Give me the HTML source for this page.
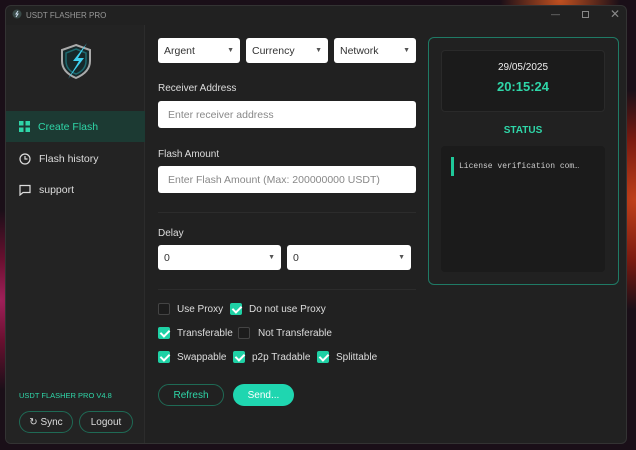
<!DOCTYPE html>
<html><head><meta charset="utf-8"><style>
*{box-sizing:border-box;margin:0;padding:0}
body{width:636px;height:450px;overflow:hidden;font-family:"Liberation Sans",sans-serif;position:relative;
background:radial-gradient(circle at 0 300px,#a0205a 0,#6a1030 40px,transparent 90px),radial-gradient(circle at 636px 200px,#c0401a 0,#7a1a10 60px,transparent 110px),radial-gradient(circle at 560px 0,#c05020 0,transparent 60px),#1a0f18;}
.a{position:absolute}
.win{left:5px;top:5px;width:622px;height:439px;background:#212121;border-radius:6px;border:1px solid #333;overflow:hidden}
.side{left:0;top:19px;width:139px;height:420px;background:#232323;border-right:1px solid #2c2c2c}
.title{left:20px;top:5px;font-size:8px;color:#999}
.nav{left:0;width:139px;height:31px;font-size:10.5px;color:#ddd;display:flex;align-items:center;padding-left:13px;gap:8px}
.sel{box-sizing:border-box;padding:0 6px;height:19px;background:#fff;border-radius:3px;font-size:10.5px;color:#333;display:flex;align-items:center;justify-content:space-between}
.sel::after{content:"▼";font-size:7px;color:#555}
.inp{height:27px;background:#fff;border-radius:3px;font-size:10.5px;color:#888;display:flex;align-items:center;padding-left:10px}
.lbl{font-size:10px;color:#ddd}
.cb{width:12px;height:12px;border-radius:2px;border:1px solid #444;background:#1c1c1c}
.cb.on{background:#1fd1a5;border-color:#1fd1a5}
.cb.on::after{content:"";position:absolute;left:3px;top:0px;width:4px;height:7px;border:solid #fff;border-width:0 2px 2px 0;transform:rotate(45deg)}
.ct{font-size:10px;color:#ddd}
.btn{height:22px;border-radius:11px;font-size:10px;display:flex;align-items:center;justify-content:center}
.hr{height:1px;background:#2c2c2c}
</style></head><body>
<div class="a win">
 <svg class="a" style="left:6px;top:3px" width="10" height="10" viewBox="0 0 10 10"><circle cx="5" cy="5" r="4.5" fill="#3a4a48"/><path d="M6 2 L4 5 H6 L4 8" stroke="#cde" fill="none" stroke-width="1"/></svg>
 <div class="a title">USDT FLASHER PRO</div>
 <div class="a" style="left:545px;top:3px;font-size:9px;color:#888">—</div>
 <div class="a" style="left:576px;top:5px;width:7px;height:7px;border:1px solid #888"></div>
 <div class="a" style="left:604px;top:1px;font-size:12px;color:#888">✕</div>
 <div class="a side">
  <svg class="a" style="left:50px;top:16px" width="40" height="42" viewBox="0 0 40 42">
   <path d="M20 4 L34 9 V20 C34 29 27 34 20 37 C13 34 6 29 6 20 V9 Z" fill="#17282a" stroke="#aaa" stroke-width="2"/>
   <path d="M20 8 L30 12 V20 C30 27 25 31 20 33 C15 31 10 27 10 20 V12 Z" fill="none" stroke="#1e6a70" stroke-width="1.5"/>
   <path d="M31 2 L17 20 H23 L12 38 L28 17 H22 Z" fill="#3fd0f0"/>
  </svg>
  <div class="a nav" style="top:86px;background:#1c3a33;color:#2fd6a8">
   <svg width="11" height="11"><rect x="0" y="0" width="4.5" height="4.5" fill="#2fd6a8"/><rect x="6.5" y="0" width="4.5" height="4.5" fill="#2fd6a8"/><rect x="0" y="6.5" width="4.5" height="4.5" fill="#2fd6a8"/><rect x="6.5" y="6.5" width="4.5" height="4.5" fill="#2fd6a8"/></svg>Create Flash</div>
  <div class="a nav" style="top:118px"><svg width="12" height="12"><circle cx="6" cy="6" r="5" fill="none" stroke="#ddd" stroke-width="1.2"/><path d="M6 3V6H8.5" stroke="#ddd" fill="none" stroke-width="1.2"/></svg>Flash history</div>
  <div class="a nav" style="top:149px"><svg width="12" height="12"><path d="M1 1.5H11V8.5H4L1 11Z" fill="none" stroke="#ddd" stroke-width="1.2"/></svg>support</div>
  <div class="a" style="left:13px;top:366px;font-size:7.5px;color:#2fd6a8">USDT FLASHER PRO V4.8</div>
  <div class="a btn" style="left:13px;top:386px;width:54px;border:1px solid #1f6a55;color:#ddd">↻ Sync</div>
  <div class="a btn" style="left:73px;top:386px;width:54px;border:1px solid #1f6a55;color:#ddd">Logout</div>
 </div>
 <div class="a sel" style="left:152px;top:32px;width:82px;height:25px">Argent</div>
 <div class="a sel" style="left:240px;top:32px;width:82px;height:25px">Currency</div>
 <div class="a sel" style="left:328px;top:32px;width:82px;height:25px">Network</div>
 <div class="a lbl" style="left:152px;top:77px">Receiver Address</div>
 <div class="a inp" style="left:152px;top:95px;width:258px">Enter receiver address</div>
 <div class="a lbl" style="left:152px;top:143px">Flash Amount</div>
 <div class="a inp" style="left:152px;top:160px;width:258px">Enter Flash Amount (Max: 200000000 USDT)</div>
 <div class="a hr" style="left:152px;top:206px;width:258px"></div>
 <div class="a lbl" style="left:152px;top:222px">Delay</div>
 <div class="a sel" style="left:152px;top:239px;width:123px;height:25px">0</div>
 <div class="a sel" style="left:281px;top:239px;width:124px;height:25px">0</div>
 <div class="a hr" style="left:152px;top:283px;width:258px"></div>
 <div class="a cb" style="left:152px;top:297px"></div><div class="a ct" style="left:171px;top:298px">Use Proxy</div>
 <div class="a cb on" style="left:224px;top:297px"></div><div class="a ct" style="left:243px;top:298px">Do not use Proxy</div>
 <div class="a cb on" style="left:152px;top:321px"></div><div class="a ct" style="left:171px;top:322px">Transferable</div>
 <div class="a cb" style="left:232px;top:321px"></div><div class="a ct" style="left:252px;top:322px">Not Transferable</div>
 <div class="a cb on" style="left:152px;top:345px"></div><div class="a ct" style="left:171px;top:346px">Swappable</div>
 <div class="a cb on" style="left:227px;top:345px"></div><div class="a ct" style="left:246px;top:346px">p2p Tradable</div>
 <div class="a cb on" style="left:311px;top:345px"></div><div class="a ct" style="left:330px;top:346px">Splittable</div>
 <div class="a btn" style="left:152px;top:378px;width:66px;border:1px solid #1f6a55;color:#2fd6a8">Refresh</div>
 <div class="a btn" style="left:227px;top:378px;width:61px;background:#1fd6b0;color:#fff">Send...</div>
 <div class="a" style="left:422px;top:31px;width:191px;height:248px;border:1px solid #1f7a65;border-radius:6px"></div>
 <div class="a" style="left:435px;top:44px;width:164px;height:62px;background:#1b1b1b;border-radius:4px;border:1px solid #2a2a2a"></div>
 <div class="a" style="left:435px;top:56px;width:164px;text-align:center;font-size:10px;color:#eee">29/05/2025</div>
 <div class="a" style="left:435px;top:73px;width:164px;text-align:center;font-size:13px;color:#2fd6a8;font-weight:bold">20:15:24</div>
 <div class="a" style="left:435px;top:119px;width:164px;text-align:center;font-size:10px;color:#2fd6a8;font-weight:bold">STATUS</div>
 <div class="a" style="left:435px;top:140px;width:164px;height:126px;background:#1b1b1b;border-radius:4px"></div>
 <div class="a" style="left:445px;top:151px;width:3px;height:19px;background:#1fc99a"></div>
 <div class="a" style="left:453px;top:156px;font-size:8px;color:#ccc;font-family:'Liberation Mono',monospace">License verification com…</div>
</div>
</body></html>
